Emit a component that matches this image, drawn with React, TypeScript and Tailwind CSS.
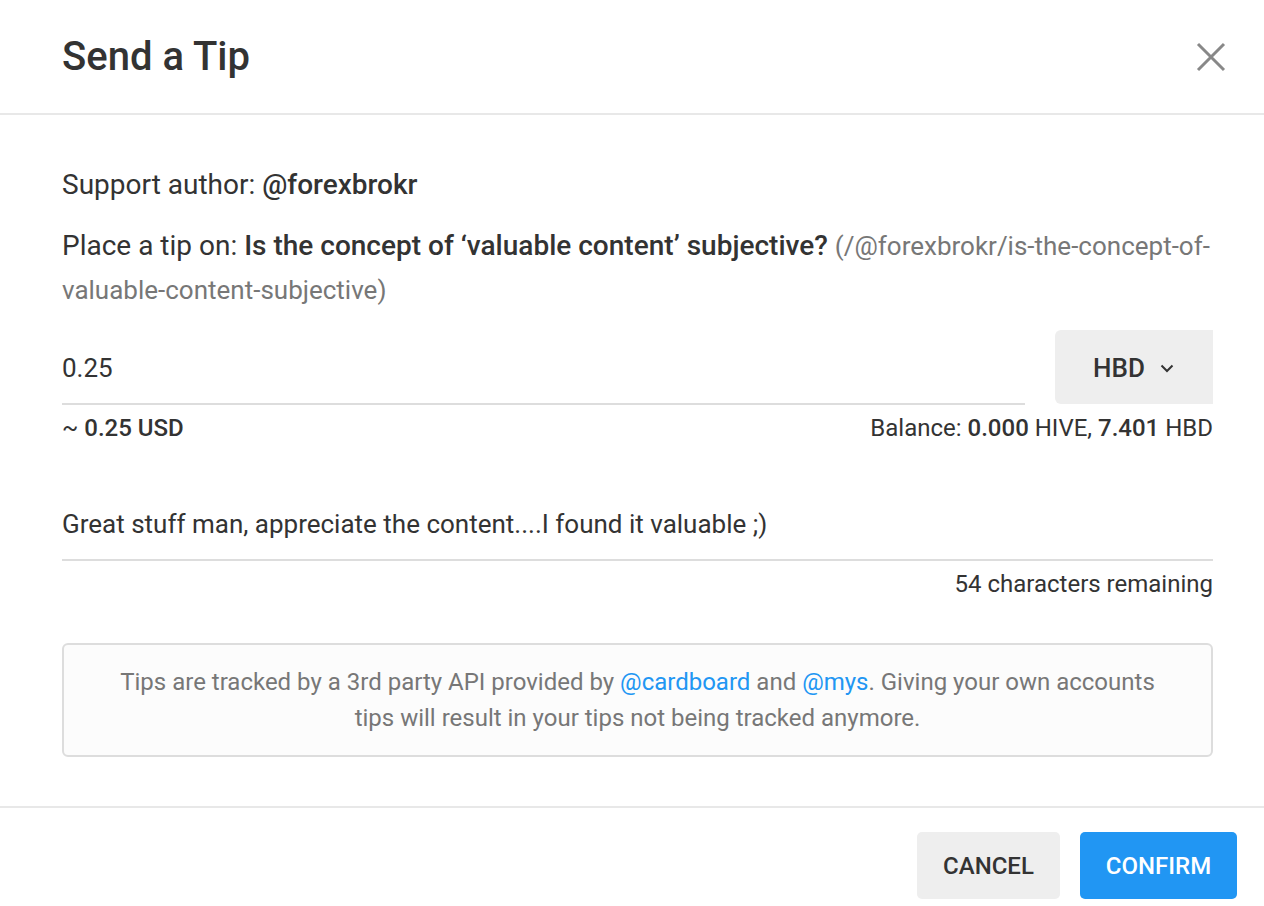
export default function App() {
  return (
    <div
      className="flex h-[906px] w-[1264px] flex-col bg-white text-[#333]"
      style={{ fontFamily: "Roboto, 'Liberation Sans', sans-serif" }}
    >
      {/* Header */}
      <div className="flex h-[115px] shrink-0 items-center justify-between border-b-2 border-[#e8e8e8] pl-[62px] pr-[38px]">
        <h1 className="text-[40px] font-medium leading-none text-[#333]">Send a Tip</h1>
        <button className="flex h-[30px] w-[30px] items-center justify-center text-[#888]">
          <svg width="30" height="30" viewBox="0 0 30 30" fill="none">
            <path d="M2 2L28 28M28 2L2 28" stroke="currentColor" strokeWidth="3" />
          </svg>
        </button>
      </div>

      {/* Body */}
      <div className="flex flex-1 flex-col pl-[62px] pr-[51px] pt-[52px]">
        <p className="text-[28px] leading-[36px]">
          Support author: <span className="font-medium">@forexbrokr</span>
        </p>
        <p className="mt-[21px] text-[28px] leading-[43px]">
          Place a tip on:{" "}
          <span className="font-medium">Is the concept of ‘valuable content’ subjective?</span>{" "}
          <span className="text-[26px] text-[#777]">
            (/@forexbrokr/is-the-concept-of-valuable-content-subjective)
          </span>
        </p>

        <div className="mt-[18px] flex items-stretch gap-[30px]">
          <div className="flex h-[75px] flex-1 items-center border-b-2 border-[#ddd] pt-[4px] text-[26px]">
            0.25
          </div>
          <button className="flex h-[74px] w-[158px] items-center justify-center gap-[14px] rounded-l-[6px] bg-[#eeeeee] pt-[2px] text-[26px] font-medium text-[#333]">
            HBD
            <svg width="16" height="10" viewBox="0 0 16 10" fill="none">
              <path d="M2.5 2.5L8 8L13.5 2.5" stroke="currentColor" strokeWidth="2" />
            </svg>
          </button>
        </div>
        <div className="mt-[9px] flex justify-between text-[24px] leading-[28px]">
          <span>
            ~ <span className="font-medium">0.25 USD</span>
          </span>
          <span>
            Balance: <span className="font-medium">0.000</span> HIVE,{" "}
            <span className="font-medium">7.401</span> HBD
          </span>
        </div>

        <div className="mt-[64px] border-b-2 border-[#ddd] pb-[17px] text-[26px] leading-[36px]">
          Great stuff man, appreciate the content....I found it valuable ;)
        </div>
        <div className="mt-[9px] text-right text-[24px] leading-[28px]">54 characters remaining</div>

        <div className="mt-[45px] flex h-[114px] flex-col items-center justify-center rounded-[6px] border-2 border-[#ddd] bg-[#fcfcfc] px-[30px] text-center text-[24px] leading-[36px] text-[#777]">
          <p>
            Tips are tracked by a 3rd party API provided by{" "}
            <span className="text-[#2196f3]">@cardboard</span> and{" "}
            <span className="text-[#2196f3]">@mys</span>. Giving your own accounts
            <br />
            tips will result in your tips not being tracked anymore.
          </p>
        </div>
      </div>

      {/* Footer */}
      <div className="flex h-[100px] shrink-0 items-start justify-end gap-[20px] border-t-2 border-[#e8e8e8] pr-[27px] pt-[24px]">
        <button className="h-[67px] w-[143px] rounded-[5px] bg-[#eeeeee] text-[24px] font-medium text-[#333]">
          CANCEL
        </button>
        <button className="h-[67px] w-[157px] rounded-[5px] bg-[#2196f3] text-[24px] font-medium text-white">
          CONFIRM
        </button>
      </div>
    </div>
  );
}
